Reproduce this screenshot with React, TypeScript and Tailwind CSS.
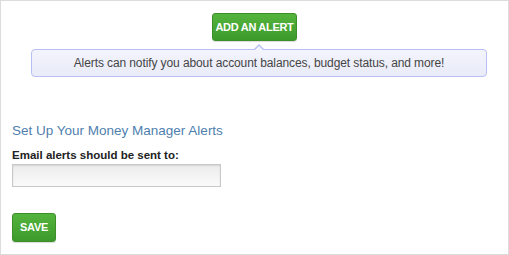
export default function App() {
  return (
    <div className="w-[509px] h-[255px] border border-[#dcdcdc] bg-white font-['Liberation_Sans',Arial,sans-serif] overflow-hidden">
      <div className="flex flex-col items-center pt-[12px]">
        <button className="w-[85px] h-[28px] rounded-[3px] border border-[#3d8f2a] bg-gradient-to-b from-[#55b43d] to-[#3b9a2b] text-white text-[11px] font-bold tracking-[-0.3px] shadow-[0_1px_1px_rgba(0,0,0,0.15)]">
          ADD AN ALERT
        </button>
      </div>
      <div className="relative ml-[30px] w-[456px] mt-[8px] h-[28px] rounded-[4px] border border-[#b7c0f4] bg-gradient-to-b from-[#f3f4fc] to-[#e9ebf8] flex items-center justify-center">
        <div className="absolute left-1/2 -top-[6px] -ml-[6px] w-0 h-0 border-x-[6px] border-x-transparent border-b-[6px] border-b-[#b7c0f4]" />
        <div className="absolute left-1/2 -top-[4px] -ml-[5px] w-0 h-0 border-x-[5px] border-x-transparent border-b-[5px] border-b-[#f3f4fc]" />
        <span className="text-[12px] text-[#454545] tracking-[-0.1px]">
          Alerts can notify you about account balances, budget status, and more!
        </span>
      </div>
      <div className="px-[11px] pt-[45px]">
        <h2 className="text-[13.5px] leading-[18px] text-[#4f7fae] font-normal">Set Up Your Money Manager Alerts</h2>
        <label className="block mt-[8px] text-[11.5px] leading-[15px] font-bold text-[#222]">Email alerts should be sent to:</label>
        <input
          type="text"
          className="block mt-[1px] w-[209px] h-[23px] border border-[#c8c8c8] bg-gradient-to-b from-[#ececec] to-[#fafafa] shadow-[inset_0_1px_2px_rgba(0,0,0,0.1)]"
        />
        <button className="mt-[26px] w-[44px] h-[29px] rounded-[3px] border border-[#3d8f2a] bg-gradient-to-b from-[#55b43d] to-[#3b9a2b] text-white text-[11px] font-bold tracking-[-0.3px] shadow-[0_1px_1px_rgba(0,0,0,0.15)]">
          SAVE
        </button>
      </div>
    </div>
  )
}
